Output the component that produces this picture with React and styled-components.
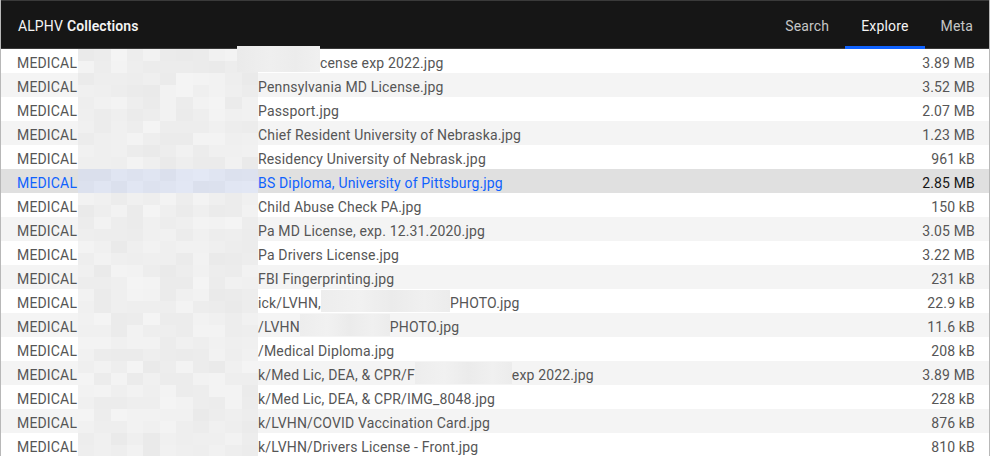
import React from "react";
import styled, { createGlobalStyle } from "styled-components";

const Global = createGlobalStyle`
  html, body { margin: 0; padding: 0; background: #ffffff; }
  body { font-family: Roboto, "Liberation Sans", sans-serif; -webkit-font-smoothing: antialiased; }
  * { box-sizing: border-box; }
`;

const Frame = styled.div`
  width: 990px;
  height: 456px;
  overflow: hidden;
  display: flex;
  flex-direction: column;
  border-left: 1px solid #b8b8b8;
  border-right: 1px solid #b8b8b8;
  background: #ffffff;
`;

const Header = styled.header`
  height: 49px;
  flex: none;
  display: flex;
  align-items: stretch;
  justify-content: space-between;
  background: #161616;
  border-top: 1px solid #3a3a3a;
  border-bottom: 1px solid #393939;
`;

const Brand = styled.div`
  display: flex;
  align-items: center;
  padding: 2px 0 0 17px;
  font-size: 14px;
  letter-spacing: 0.1px;
  color: #f4f4f4;
  gap: 4px;
`;

const BrandStrong = styled.span`
  font-weight: 600;
`;

const Nav = styled.nav`
  display: flex;
  align-items: stretch;
`;

const NavItem = styled.a`
  display: flex;
  align-items: center;
  padding: 4px 16px 0;
  font-size: 14px;
  letter-spacing: 0.16px;
  color: ${(p) => (p.$active ? "#f4f4f4" : "#c6c6c6")};
  text-decoration: none;
  border-bottom: 3px solid ${(p) => (p.$active ? "#0f62fe" : "transparent")};
  margin-bottom: -1px;
`;

const Table = styled.div`
  display: flex;
  flex-direction: column;
`;

const Row = styled.div`
  height: 24px;
  flex: none;
  display: flex;
  align-items: center;
  padding: 0 14px 0 16px;
  font-size: 14px;
  letter-spacing: 0.16px;
  background: ${(p) => (p.$selected ? "#e0e0e0" : p.$odd ? "#f4f4f4" : "#ffffff")};
  color: ${(p) => (p.$selected ? "#0f62fe" : "#565656")};
  white-space: nowrap;
`;

const Text = styled.span`
  padding-top: 3px;
`;

const Collection = styled(Text)`
  width: 61px;
  flex: none;
`;

const Mosaic = styled.div`
  width: 180px;
  height: 24px;
  flex: none;
  display: grid;
  grid-template-columns: repeat(11, 1fr);
  grid-template-rows: 1fr 1fr;
`;

const Cell = styled.span`
  display: block;
`;

const Name = styled.span`
  flex: 1;
  height: 24px;
  display: flex;
  align-items: center;
  position: relative;
`;

const InlineRedact = styled.span`
  display: inline-block;
  height: 22px;
  flex: none;
  background: linear-gradient(90deg, #ededed 0%, #f1f1f1 30%, #ebebeb 55%, #f0f0f0 80%, #ececec 100%);
`;

const TopRedact = styled.span`
  position: absolute;
  left: -21px;
  top: -3px;
  width: 83px;
  height: 26px;
  background: linear-gradient(90deg, #eaeaea 0%, #efefef 40%, #ececec 70%, #f0f0f0 100%);
`;

const Lead = styled(Text)`
  margin-left: 62px;
`;

const Size = styled(Text)`
  flex: none;
  text-align: right;
  color: ${(p) => (p.$selected ? "#161616" : "#565656")};
`;

const rows = [
  { parts: [{ t: "cense exp 2022.jpg", top: true }], size: "3.89 MB" },
  { parts: ["Pennsylvania MD License.jpg"], size: "3.52 MB" },
  { parts: ["Passport.jpg"], size: "2.07 MB" },
  { parts: ["Chief Resident University of Nebraska.jpg"], size: "1.23 MB" },
  { parts: ["Residency University of Nebrask.jpg"], size: "961 kB" },
  { parts: ["BS Diploma, University of Pittsburg.jpg"], size: "2.85 MB", selected: true },
  { parts: ["Child Abuse Check PA.jpg"], size: "150 kB" },
  { parts: ["Pa MD License, exp. 12.31.2020.jpg"], size: "3.05 MB" },
  { parts: ["Pa Drivers License.jpg"], size: "3.22 MB" },
  { parts: ["FBI Fingerprinting.jpg"], size: "231 kB" },
  { parts: ["ick/LVHN,", { r: 129 }, "PHOTO.jpg"], size: "22.9 kB" },
  { parts: ["/LVHN", { r: 90 }, "PHOTO.jpg"], size: "11.6 kB" },
  { parts: ["/Medical Diploma.jpg"], size: "208 kB" },
  { parts: ["k/Med Lic, DEA, & CPR/F", { r: 97 }, "exp 2022.jpg"], size: "3.89 MB" },
  { parts: ["k/Med Lic, DEA, & CPR/IMG_8048.jpg"], size: "228 kB" },
  { parts: ["k/LVHN/COVID Vaccination Card.jpg"], size: "876 kB" },
  { parts: ["k/LVHN/Drivers License - Front.jpg"], size: "810 kB" },
];

function shade(i, j, selected) {
  const n = Math.abs(Math.sin(i * 12.9898 + j * 78.233) * 43758.5453) % 1;
  const v = Math.round(234 + n * 10);
  if (selected) {
    return `rgb(${v - 16}, ${v - 11}, ${v + 2})`;
  }
  return `rgb(${v}, ${v}, ${v})`;
}

function MosaicCell({ row, selected }) {
  const cells = [];
  for (let k = 0; k < 22; k++) {
    cells.push(<Cell key={k} style={{ background: shade(row * 2 + Math.floor(k / 11), k % 11, selected) }} />);
  }
  return <Mosaic>{cells}</Mosaic>;
}

export default function App() {
  return (
    <>
      <Global />
      <Frame>
        <Header>
          <Brand>
            <span>ALPHV</span>
            <BrandStrong>Collections</BrandStrong>
          </Brand>
          <Nav>
            <NavItem>Search</NavItem>
            <NavItem $active>Explore</NavItem>
            <NavItem>Meta</NavItem>
          </Nav>
        </Header>
        <Table>
          {rows.map((r, i) => (
            <Row key={i} $odd={i % 2 === 1} $selected={r.selected}>
              <Collection>MEDICAL</Collection>
              <MosaicCell row={i} selected={r.selected} />
              <Name>
                {r.parts.map((p, j) => {
                  if (typeof p === "string") return <Text key={j}>{p}</Text>;
                  if (p.r) return <InlineRedact key={j} style={{ width: p.r }} />;
                  return (
                    <React.Fragment key={j}>
                      <TopRedact />
                      <Lead>{p.t}</Lead>
                    </React.Fragment>
                  );
                })}
              </Name>
              <Size $selected={r.selected}>{r.size}</Size>
            </Row>
          ))}
        </Table>
      </Frame>
    </>
  );
}
